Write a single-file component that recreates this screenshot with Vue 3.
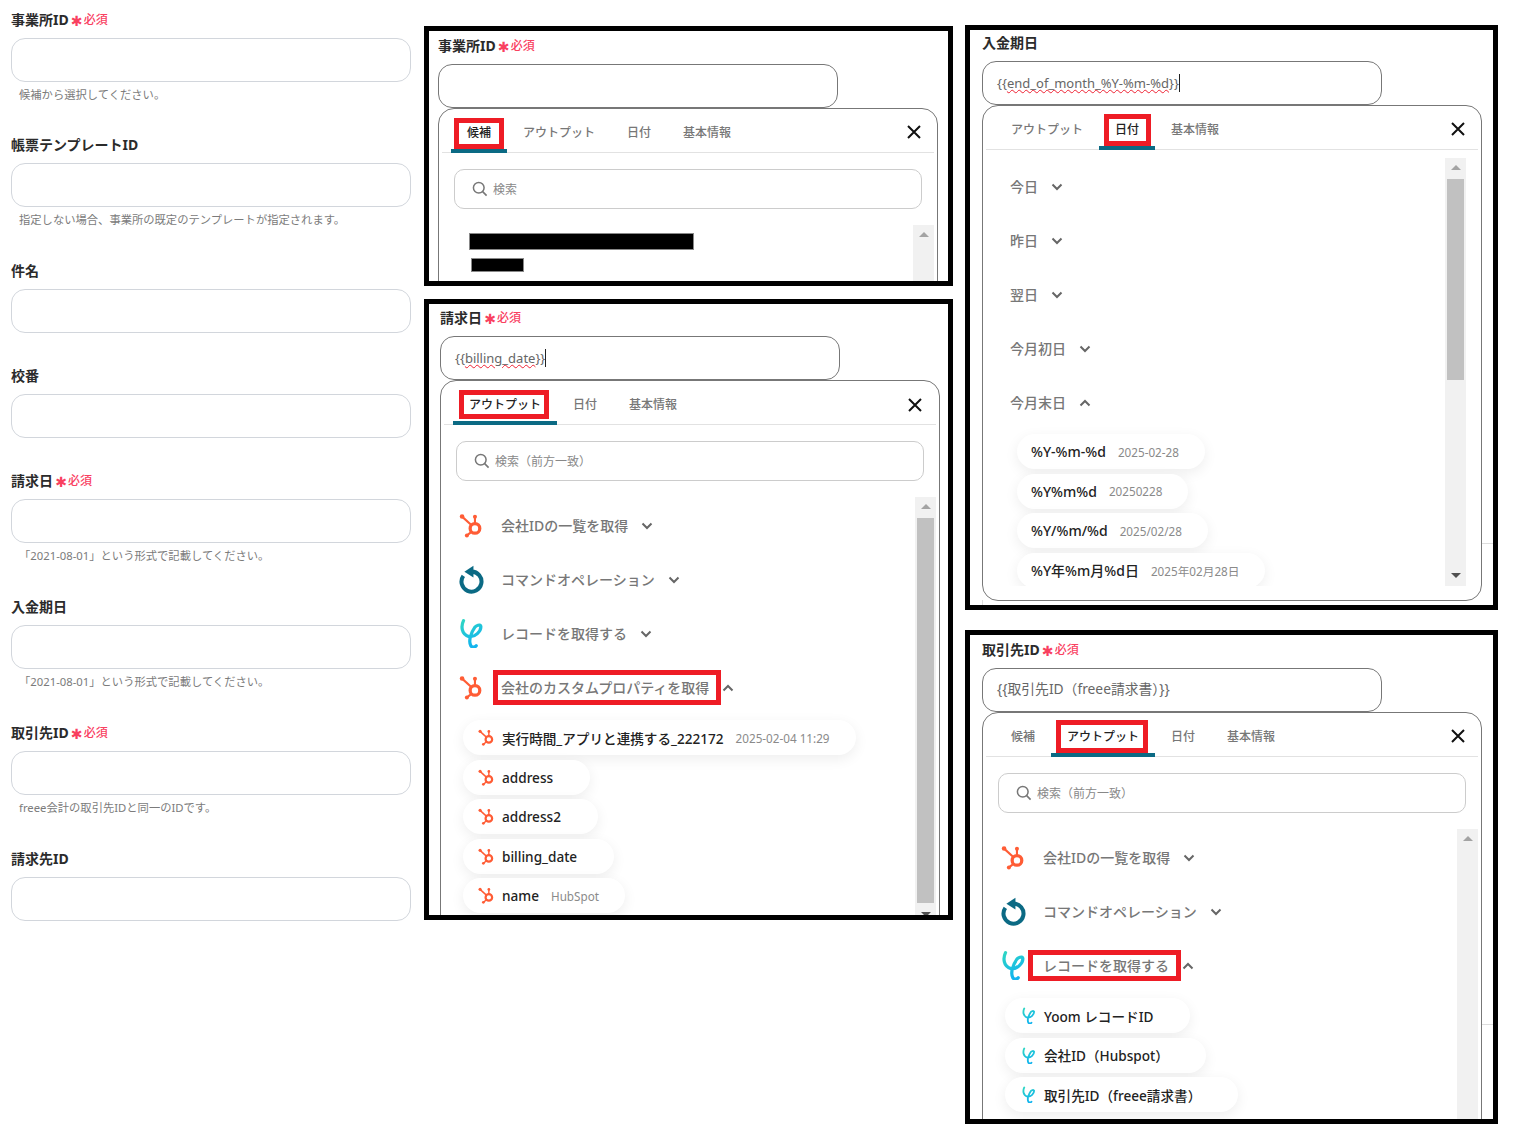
<script setup>
const fields = [
  { label: '事業所ID', req: true, hint: '候補から選択してください。' },
  { label: '帳票テンプレートID', hint: '指定しない場合、事業所の既定のテンプレートが指定されます。' },
  { label: '件名' },
  { label: '校番' },
  { label: '請求日', req: true, hint: '「2021-08-01」という形式で記載してください。' },
  { label: '入金期日', hint: '「2021-08-01」という形式で記載してください。' },
  { label: '取引先ID', req: true, hint: 'freee会計の取引先IDと同一のIDです。' },
  { label: '請求先ID' }
]

const hsPills = [
  { name: '実行時間_アプリと連携する_222172', sub: '2025-02-04 11:29' },
  { name: 'address' },
  { name: 'address2' },
  { name: 'billing_date' },
  { name: 'name', sub: 'HubSpot' }
]

const col2 = [
  {
    key: 'a', cls: 'p1', label: '事業所ID', req: true, search: '検索', thumb: 0,
    tabs: ['候補', 'アウトプット', '日付', '基本情報'], active: 0,
    redacted: true, rows: []
  },
  {
    key: 'b', cls: 'p2', label: '請求日', req: true, search: '検索（前方一致）', thumb: 385,
    value: { pre: '{{', wavy: 'billing_date', post: '}}', caret: true },
    tabs: ['アウトプット', '日付', '基本情報'], active: 0,
    rows: [
      { icon: 'hs', text: '会社IDの一覧を取得' },
      { icon: 'cmd', text: 'コマンドオペレーション' },
      { icon: 'yoom', text: 'レコードを取得する' },
      { icon: 'hs', text: '会社のカスタムプロパティを取得', open: true, mark: 'mark-row-a', pillIcon: 'hs', pills: hsPills }
    ]
  }
]

const col3 = [
  {
    key: 'c', cls: 'p3', label: '入金期日', thumb: 201,
    value: { pre: '{{', wavy: 'end_of_month_%Y-%m-%d', post: '}}', caret: true },
    tabs: ['アウトプット', '日付', '基本情報'], active: 1,
    rows: [
      { text: '今日' },
      { text: '昨日' },
      { text: '翌日' },
      { text: '今月初日' },
      {
        text: '今月末日', open: true,
        pills: [
          { name: '%Y-%m-%d', sub: '2025-02-28' },
          { name: '%Y%m%d', sub: '20250228' },
          { name: '%Y/%m/%d', sub: '2025/02/28' },
          { name: '%Y年%m月%d日', sub: '2025年02月28日' }
        ]
      }
    ]
  },
  {
    key: 'd', cls: 'p4', label: '取引先ID', req: true, search: '検索（前方一致）', thumb: 0,
    value: { pre: '{{取引先ID（freee請求書）}}' },
    tabs: ['候補', 'アウトプット', '日付', '基本情報'], active: 1,
    rows: [
      { icon: 'hs', text: '会社IDの一覧を取得' },
      { icon: 'cmd', text: 'コマンドオペレーション' },
      {
        icon: 'yoom', text: 'レコードを取得する', open: true, mark: 'mark-row-b', pillIcon: 'yoom',
        pills: [
          { name: 'Yoom レコードID' },
          { name: '会社ID（Hubspot）' },
          { name: '取引先ID（freee請求書）' }
        ]
      }
    ]
  }
]

const columns = [
  { key: 'col2', cls: 'col-mid', panels: col2 },
  { key: 'col3', cls: 'col-right', panels: col3 }
]
</script>

<template>
  <svg class="defs" aria-hidden="true">
    <defs>
      <linearGradient id="yoomGrad" x1="0" y1="0" x2="0.4" y2="1">
        <stop offset="0" stop-color="#2ed6c4" />
        <stop offset="1" stop-color="#12b4ee" />
      </linearGradient>
      <symbol id="ic-hs" viewBox="0 0 26 26">
        <g fill="none" stroke="#ff5c35">
          <circle cx="16.6" cy="16" r="5" stroke-width="3.4" />
          <path d="M3.5 4 12.8 12.4" stroke-width="2.2" />
          <path d="M16.6 4.5V11" stroke-width="2.2" />
          <path d="M8.6 23 13 19.6" stroke-width="2.2" />
        </g>
        <g fill="#ff5c35">
          <circle cx="3.2" cy="3.6" r="2.4" />
          <circle cx="16.6" cy="3.8" r="2.1" />
          <circle cx="8.2" cy="23.4" r="2.1" />
        </g>
      </symbol>
      <symbol id="ic-cmd" viewBox="0 0 26 30">
        <path d="M13 6.8A10.4 10.4 0 1 1 4.5 11.2" fill="none" stroke="#0b6a84" stroke-width="4.2" />
        <path d="M15 .6V13L5.6 7Z" fill="#0b6a84" />
      </symbol>
      <symbol id="ic-yoom" viewBox="0 0 72 92">
        <path d="M13 8C5 25 6 50 30 57 48 60 68 40 66 25 64 18 52 24 48 28 38 42 26 70 36 86 40 91 48 90 52 85" fill="none" stroke="url(#yoomGrad)" stroke-width="10" stroke-linecap="round" />
      </symbol>
    </defs>
  </svg>

  <div class="page">
    <div class="col-form">
      <div v-for="f in fields" :key="f.label" class="field" :class="{ 'has-hint': f.hint }">
        <div class="label">{{ f.label }}<span v-if="f.req" class="req"><i>✱</i>必須</span></div>
        <div class="input"></div>
        <div v-if="f.hint" class="hint">{{ f.hint }}</div>
      </div>
    </div>

    <div v-for="col in columns" :key="col.key" class="col" :class="col.cls">
      <section v-for="p in col.panels" :key="p.key" class="panel" :class="p.cls">
        <span class="stray stray-right"></span>
        <span class="stray stray-left"></span>
        <div class="label">{{ p.label }}<span v-if="p.req" class="req"><i>✱</i>必須</span></div>
        <div class="input focused">
          <template v-if="p.value">
            <span>{{ p.value.pre }}</span><span v-if="p.value.wavy" class="wavy">{{ p.value.wavy }}</span><span v-if="p.value.post">{{ p.value.post }}</span><span v-if="p.value.caret" class="caret"></span>
          </template>
        </div>
        <div class="popup">
          <div class="tabs">
            <div v-for="(t, i) in p.tabs" :key="t" class="tab" :class="{ active: i === p.active }">
              {{ t }}<span v-if="i === p.active" class="mark mark-tab"></span>
            </div>
            <svg class="close" viewBox="0 0 14 14"><path d="M1 1 13 13M13 1 1 13" stroke="#111" stroke-width="2" fill="none" /></svg>
          </div>
          <div v-if="p.search" class="search">
            <svg class="lens" viewBox="0 0 18 18"><circle cx="7.6" cy="7.6" r="6" fill="none" stroke="#777" stroke-width="1.7" /><path d="M12 12 16.4 16.4" stroke="#777" stroke-width="1.8" /></svg>
            <span>{{ p.search }}</span>
          </div>
          <div class="body">
            <div class="list">
              <div v-if="p.redacted" class="redacted">
                <div class="black b1"></div>
                <div class="black b2"></div>
              </div>
              <div v-for="r in p.rows" :key="r.text" class="group">
                <div class="row" :class="{ 'no-icon': !r.icon }">
                  <svg v-if="r.icon" class="row-icon" :class="'i-' + r.icon"><use :href="'#ic-' + r.icon" /></svg>
                  <span class="row-text">{{ r.text }}<span v-if="r.mark" class="mark" :class="r.mark"></span></span>
                  <svg class="chev" viewBox="0 0 12 8"><path :d="r.open ? 'M1.5 6.5 6 2l4.5 4.5' : 'M1.5 1.5 6 6l4.5-4.5'" fill="none" stroke="#666" stroke-width="2" /></svg>
                </div>
                <div v-if="r.pills" class="pills" :class="{ 'no-icon': !r.pillIcon }">
                  <div v-for="pl in r.pills" :key="pl.name" class="pill">
                    <svg v-if="r.pillIcon" class="pill-icon"><use :href="'#ic-' + r.pillIcon" /></svg>
                    <span class="pill-name">{{ pl.name }}</span>
                    <span v-if="pl.sub" class="pill-sub">{{ pl.sub }}</span>
                  </div>
                </div>
              </div>
            </div>
            <div class="scroll">
              <span class="arrow up"></span>
              <div v-if="p.thumb === 385" class="thumb thumb-long"></div>
              <div v-else-if="p.thumb === 201" class="thumb thumb-short"></div>
              <span class="arrow down"></span>
            </div>
          </div>
        </div>
      </section>
    </div>
  </div>
</template>

<style>
html, body { background: #fff; }
</style>

<style scoped>
.defs { position: absolute; width: 0; height: 0; }
.page {
  display: flex;
  width: 1520px;
  height: 1146px;
  overflow: hidden;
  background: #fff;
  font-family: "Noto Sans", "Noto Sans CJK JP", sans-serif;
  color: #222;
}
.col-form { width: 400px; margin-left: 11px; padding-top: 11px; }
.field { height: 105px; }
.field.has-hint { height: 126px; }
.field:first-child { height: 125px; }
.label {
  height: 18px;
  line-height: 18px;
  font-size: 14px;
  font-weight: 700;
  color: #2b2b2b;
  display: flex;
  align-items: center;
  white-space: nowrap;
}
.req {
  display: inline-flex;
  align-items: center;
  margin-left: 1px;
  font-size: 12px;
  font-weight: 500;
  color: #f9405f;
}
.req i {
  font-family: "DejaVu Sans", sans-serif;
  font-style: normal;
  font-size: 14px;
  width: 14px;
  text-align: center;
  line-height: 18px;
  padding-top: 2px;
}
.input {
  box-sizing: border-box;
  width: 400px;
  height: 44px;
  margin-top: 9px;
  border: 1px solid #d2d6dc;
  border-radius: 14px;
  padding: 0 14px;
  display: flex;
  align-items: center;
  font-size: 13px;
  color: #666;
  white-space: nowrap;
}
.input.focused { border-color: #777; }
.p4 .input { font-size: 13.8px; padding-bottom: 4px; }
.hint { margin-top: 3px; padding-left: 8px; font-size: 11.3px; line-height: 20px; color: #7b7b7b; white-space: nowrap; }
.wavy { text-decoration: underline wavy #ee2233 1px; text-underline-offset: 1px; }
.caret { display: inline-block; width: 1px; height: 18px; background: #222; }

.col { display: flex; flex-direction: column; }
.col-mid { width: 529px; margin-left: 13px; padding-top: 26px; gap: 13px; }
.col-right { width: 533px; margin-left: 12px; padding-top: 25px; gap: 20px; }
.panel {
  position: relative;
  box-sizing: border-box;
  border: 5px solid #000;
  overflow: hidden;
  background: #fff;
}
.p1 { height: 260px; padding: 6px 0 0 9px; }
.p2 { height: 621px; padding: 5px 0 0 11px; }
.p3 { height: 585px; padding: 4px 0 0 12px; }
.p4 { height: 494px; padding: 6px 0 0 12px; }

.stray { display: none; position: absolute; background: #ddd; }
.p3 .stray, .p4 .stray { display: block; }
.stray-right { right: 0; height: 1px; width: 11px; }
.p3 .stray-right { top: 513px; }
.p4 .stray-right { top: 389px; }
.stray-left { left: 12px; width: 1px; height: 5px; bottom: 0; }
.p4 .stray-left { display: none; }

.popup {
  box-sizing: border-box;
  width: 500px;
  height: 620px;
  border: 1px solid #777;
  border-radius: 16px;
  background: #fff;
}
.p3 .popup { height: 496px; }
.tabs {
  position: relative;
  display: flex;
  height: 43px;
  margin: 0 3px;
  padding-left: 9px;
  border-bottom: 1px solid #e2e2e2;
}
.tab {
  position: relative;
  box-sizing: border-box;
  height: 44px;
  padding: 3px 16px 0;
  line-height: 41px;
  font-size: 12px;
  font-weight: 500;
  color: #777;
  white-space: nowrap;
}
.tab.active { color: #222; border-bottom: 4px solid #0b6a84; border-radius: 3px 3px 0 0; }
.close { position: absolute; right: 13px; top: 16px; width: 14px; height: 14px; }
.p2 .close { right: 14px; top: 17px; }
.mark { position: absolute; box-sizing: border-box; border: 5px solid #ee1c25; pointer-events: none; }
.mark-tab { top: 9px; bottom: 0; left: 3px; right: 3px; }
.p2 .mark-tab { left: 6px; right: 8px; bottom: 2px; }
.p3 .mark-tab { left: 5px; right: 4px; top: 8px; }
.p4 .mark-tab { left: 5px; right: 7px; top: 7px; }

.search {
  box-sizing: border-box;
  display: flex;
  align-items: center;
  height: 40px;
  margin: 16px 15px 16px;
  padding-left: 17px;
  border: 1px solid #ccc;
  border-radius: 10px;
  font-size: 12px;
  color: #888;
}
.lens { width: 16px; height: 16px; margin-right: 5px; }
.body { display: flex; height: 428px; margin-right: 3px; }
.p3 .body { margin: 8px 15px 0 0; }
.list { flex: 1; min-width: 0; overflow: hidden; padding-top: 1px; }
.row {
  display: flex;
  align-items: center;
  height: 54px;
  padding-left: 18px;
  font-size: 14px;
  font-weight: 500;
  color: #777;
}
.row.no-icon { padding-left: 27px; }
.row-icon { width: 25px; height: 25px; margin-right: 17px; flex: none; }
.row-icon.i-cmd { height: 29px; }
.row-icon.i-yoom { height: 30px; width: 24px; margin-right: 18px; }
.row-text { position: relative; white-space: nowrap; }
.chev { width: 12px; height: 8px; margin: 2px 0 0 13px; }
.mark-row-a { left: -8px; right: -12px; top: -7px; bottom: -8px; }
.mark-row-b { left: -15px; right: -12px; top: -5px; bottom: -6px; }
.pills { padding: 6px 0 0 22px; }
.pills.no-icon { padding: 5px 0 0 34px; }
.pill {
  display: flex;
  align-items: center;
  box-sizing: border-box;
  width: max-content;
  height: 35px;
  margin-bottom: 4.5px;
  padding: 0 26px 0 15px;
  border-radius: 18px;
  background: #fff;
  box-shadow: 0 4px 14px rgba(0, 0, 0, .07);
  font-size: 13.6px;
  font-weight: 500;
  color: #222;
  white-space: nowrap;
}
.no-icon .pill { padding-left: 14px; font-size: 14px; }
.pill-name:last-child { margin-right: 11px; }
.pill-icon { width: 17px; height: 17px; margin-right: 7px; flex: none; }
.pill-sub { margin-left: 12px; font-size: 11.7px; font-weight: 400; color: #8a8a8a; }
.redacted { padding: 7px 0 0 30px; }
.black { background: #000; outline: 1px solid #888; outline-offset: -1px; }
.b1 { width: 225px; height: 17px; }
.b2 { width: 53px; height: 14px; margin: 8px 0 0 2px; }

.scroll { position: relative; flex: none; width: 21px; background: #f1f1f1; }
.arrow { position: absolute; left: 6px; width: 0; height: 0; border-left: 5px solid transparent; border-right: 5px solid transparent; }
.arrow.up { top: 7px; border-bottom: 5px solid #a3a3a3; }
.arrow.down { bottom: 8px; border-top: 5px solid #505050; }
.thumb { position: absolute; left: 2px; right: 2px; top: 21px; background: #c1c1c1; }
.thumb-long { height: 385px; }
.thumb-short { height: 201px; }
</style>
